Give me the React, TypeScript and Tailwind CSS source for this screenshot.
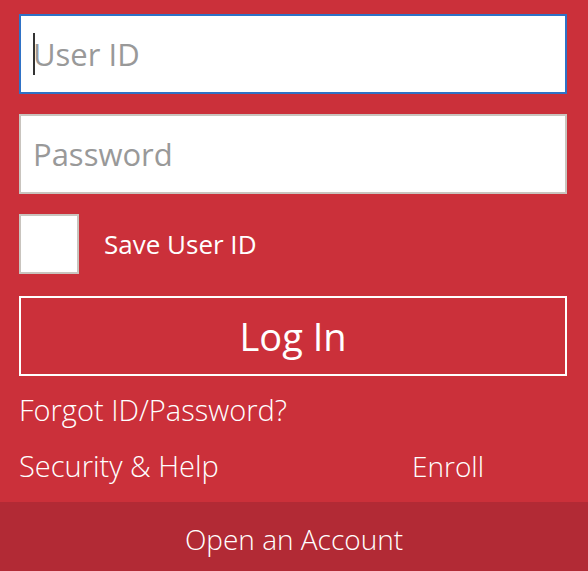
import { useState } from "react";

export default function App() {
    const [userId, setUserId] = useState("");
    const [password, setPassword] = useState("");
    const [saveId, setSaveId] = useState(false);

    return (
        <div
            className="w-[588px] h-[571px] bg-[#cb303a] flex flex-col text-white overflow-hidden"
            style={{ fontFamily: '"Open Sans", "Noto Sans", sans-serif' }}
        >
            <div className="flex-1 flex flex-col pl-[19px] pr-[21px] pt-[14px]">
                <div className="relative h-[80px] bg-white border-2 border-[#2f72c6]">
                    <span className="absolute left-[12px] top-[17px] w-[2px] h-[42px] bg-[#333]" />
                    <input
                        value={userId}
                        onChange={(e) => setUserId(e.target.value)}
                        placeholder="User ID"
                        className="w-full h-full pl-[12px] pr-3 text-[31px] text-[#333] placeholder:text-[#999] outline-none bg-transparent"
                    />
                </div>

                <div className="mt-[20px] h-[80px] bg-white border-2 border-[#c9c4be]">
                    <input
                        type="password"
                        value={password}
                        onChange={(e) => setPassword(e.target.value)}
                        placeholder="Password"
                        className="w-full h-full pl-[12px] pr-3 text-[31px] text-[#333] placeholder:text-[#999] outline-none bg-transparent"
                    />
                </div>

                <label className="mt-[20px] flex items-center gap-[25px] cursor-pointer">
                    <button
                        onClick={() => setSaveId(!saveId)}
                        className="w-[60px] h-[60px] bg-white border-2 border-[#c9c4be] shrink-0"
                    />
                    <span className="text-[26px] leading-none">Save User ID</span>
                </label>

                <button className="mt-[22px] h-[80px] border-2 border-white text-[38px]">
                    Log In
                </button>

                <a className="mt-[14px] text-[29px] font-light leading-[40px]">Forgot ID/Password?</a>

                <div className="mt-[16px] flex items-center">
                    <a className="w-[393px] text-[29px] font-light leading-[40px]">Security &amp; Help</a>
                    <a className="text-[28px] font-light leading-[40px]">Enroll</a>
                </div>
            </div>

            <div className="h-[69px] bg-[#b22a35] flex items-center justify-center pt-[4px]">
                <span className="text-[28px] font-light">Open an Account</span>
            </div>
        </div>
    );
}
